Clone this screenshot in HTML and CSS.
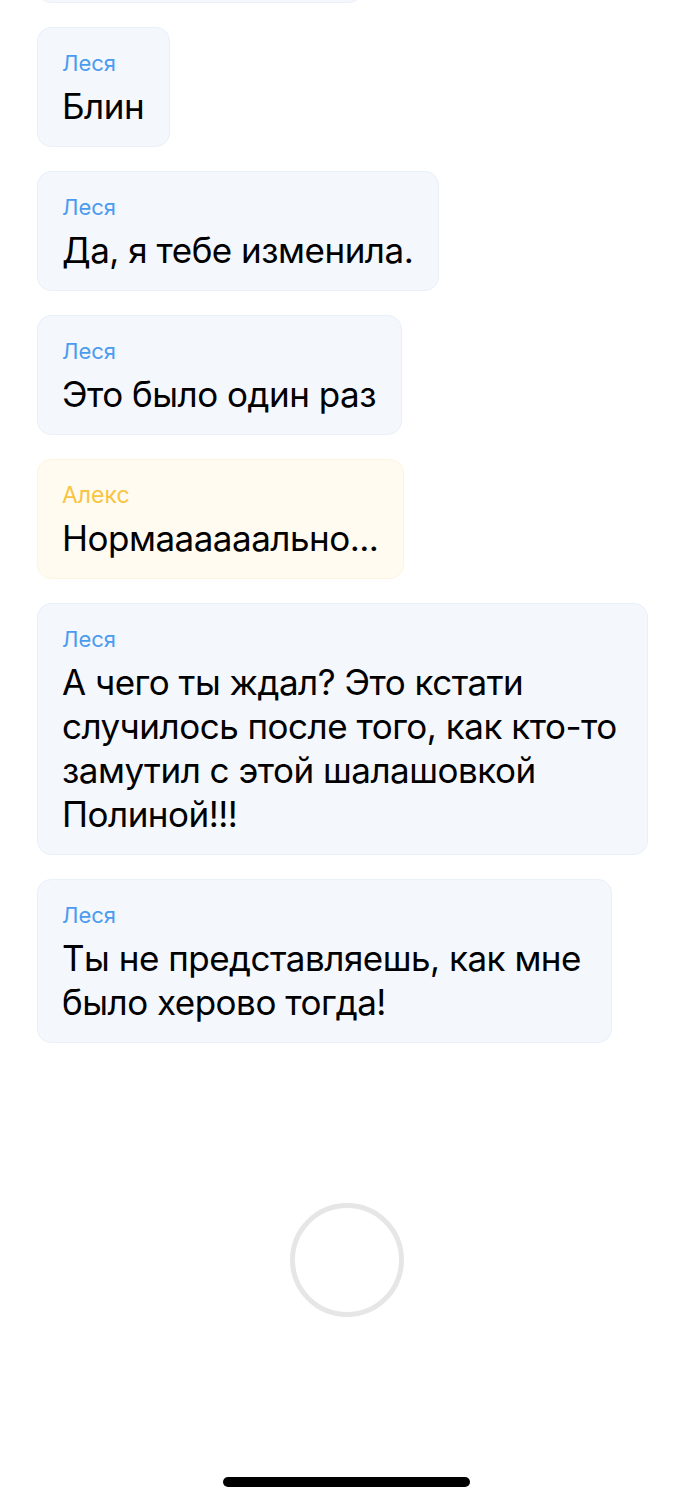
FILE: index.html
```html
<!DOCTYPE html>
<html lang="ru">
<head>
<meta charset="utf-8">
<link rel="stylesheet" href="styles.css">
</head>
<body>
<div class="screen">
  <div class="chat">
    <div class="bubble bubble-stub"></div>
    <div class="bubble">
      <div class="name">Леся</div>
      <div class="text">Блин</div>
    </div>
    <div class="bubble">
      <div class="name">Леся</div>
      <div class="text">Да, я тебе изменила.</div>
    </div>
    <div class="bubble">
      <div class="name">Леся</div>
      <div class="text">Это было один раз</div>
    </div>
    <div class="bubble bubble-alex">
      <div class="name">Алекс</div>
      <div class="text">Нормаааааально...</div>
    </div>
    <div class="bubble bubble-multi">
      <div class="name">Леся</div>
      <div class="text">А чего ты ждал? Это кстати<br>случилось после того, как кто-то<br>замутил с этой шалашовкой<br>Полиной!!!</div>
    </div>
    <div class="bubble bubble-multi">
      <div class="name">Леся</div>
      <div class="text">Ты не представляешь, как мне<br>было херово тогда!</div>
    </div>
  </div>
  <div class="loader"><div class="ring"></div></div>
  <div class="home"><div class="home-bar"></div></div>
</div>
</body>
</html>
```
FILE: styles.css
```css
* { box-sizing: border-box; }
html, body { margin: 0; padding: 0; background: #ffffff; }
body {
  font-family: Inter, "Noto Sans", "DejaVu Sans", sans-serif;
  color: #000;
}
.screen {
  width: 693px;
  height: 1500px;
  overflow: hidden;
  display: flex;
  flex-direction: column;
}
.chat {
  display: flex;
  flex-direction: column;
  align-items: flex-start;
  gap: 24px;
  padding: 0 45px 0 37px;
}
.bubble {
  background: #f4f7fc;
  border: 1px solid #e9f0fa;
  border-radius: 14px;
  padding: 20px 25px 18px 24px;
}
.bubble-multi {
  padding-right: 30px;
}
.bubble-stub {
  width: 326px;
  height: 60px;
  margin-top: -57px;
}
.bubble-alex {
  background: #fffbf0;
  border-color: #fdf5e1;
}
.name {
  font-size: 22px;
  line-height: 30px;
  color: #4b9bf0;
}
.bubble-alex .name { color: #f7c443; font-size: 23px; }
.text {
  font-size: 35px;
  line-height: 44px;
  margin-top: 6px;
  letter-spacing: -0.5px;
  white-space: nowrap;
}
.loader {
  display: flex;
  justify-content: center;
  margin-top: 160px;
}
.ring {
  width: 114px;
  height: 114px;
  border-radius: 50%;
  border: 5px solid #e6e6e6;
}
.home {
  margin-top: auto;
  display: flex;
  justify-content: center;
  padding-bottom: 13px;
}
.home-bar {
  width: 247px;
  height: 10px;
  border-radius: 5px;
  background: #000;
}
```
